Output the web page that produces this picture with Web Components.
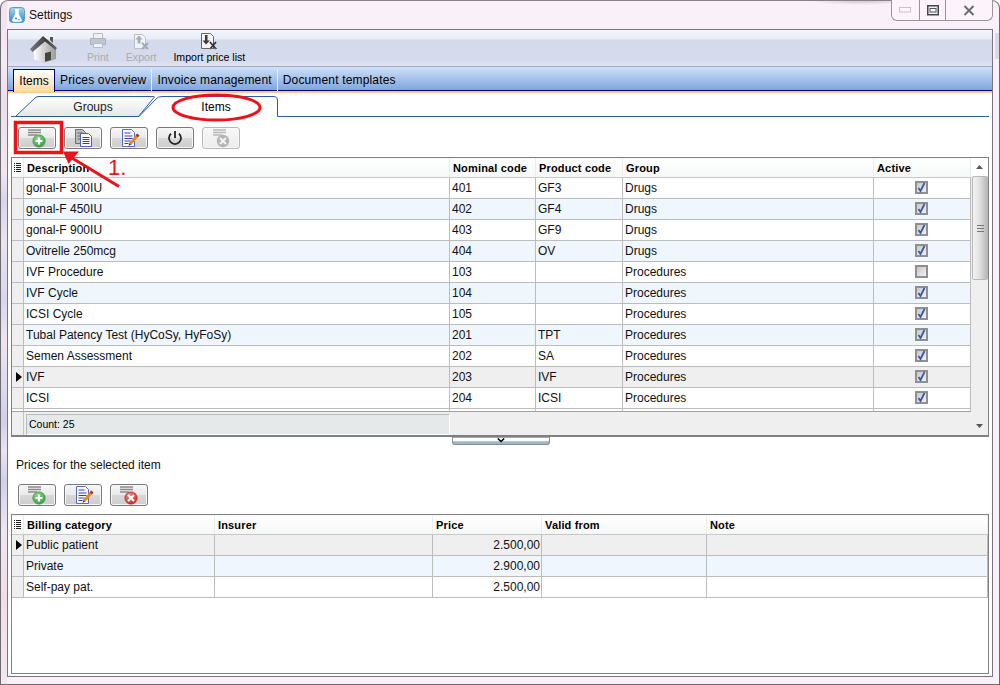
<!DOCTYPE html>
<html><head><meta charset="utf-8"><title>Settings</title>
<style>
html,body{margin:0;padding:0;height:685px;overflow:hidden}
body{font:12px "Liberation Sans",Arial,sans-serif;color:#000;position:relative;width:1000px}
</style></head>
<body>
<x-window label="Settings">
  <x-ribbon>
    <x-ribbon-item icon="home" home></x-ribbon-item>
    <x-ribbon-item icon="print" disabled>Print</x-ribbon-item>
    <x-ribbon-item icon="export" disabled>Export</x-ribbon-item>
    <x-ribbon-item icon="import">Import price list</x-ribbon-item>
  </x-ribbon>
  <x-tabs>
    <x-tab active>Items</x-tab>
    <x-tab>Prices overview</x-tab>
    <x-tab sep>Invoice management</x-tab>
    <x-tab sep>Document templates</x-tab>
  </x-tabs>
  <x-panel>
    <x-subtabs></x-subtabs>
    <x-buttons top="10" bottom="8">
      <x-btn icon="add"></x-btn><x-btn icon="copy"></x-btn><x-btn icon="edit"></x-btn><x-btn icon="power"></x-btn><x-btn icon="del" disabled></x-btn>
    </x-buttons>
    <x-grid id="g1" cols="12px 426px 86px 87px 251px 97px" footer scroll h="280">
      <x-row head><x-cell grip></x-cell><x-cell>Description</x-cell><x-cell>Nominal code</x-cell><x-cell>Product code</x-cell><x-cell>Group</x-cell><x-cell>Active</x-cell></x-row>
    </x-grid>
    <x-splitter></x-splitter>
    <x-label>Prices for the selected item</x-label>
    <x-buttons top="12" bottom="8">
      <x-btn icon="add"></x-btn><x-btn icon="edit"></x-btn><x-btn icon="delred"></x-btn>
    </x-buttons>
    <x-grid id="g2" cols="12px 191px 218px 109px 165px 281px" h="160">
      <x-row head><x-cell grip></x-cell><x-cell>Billing category</x-cell><x-cell>Insurer</x-cell><x-cell>Price</x-cell><x-cell>Valid from</x-cell><x-cell>Note</x-cell></x-row>
    </x-grid>
  </x-panel>
</x-window>
<x-annotations></x-annotations>

<script>
const ICONS = {
 add:`<svg width="36" height="20" viewBox="0 0 36 20"><defs><radialGradient id="g" cx=".4" cy=".3" r=".8"><stop offset="0" stop-color="#8ed88a"/><stop offset="1" stop-color="#2a9a3a"/></radialGradient></defs><path d="M9 2h13M9 4.5h13M9 7h9" stroke="#8a8a8a" stroke-width="1.4" fill="none"/><circle cx="20" cy="13" r="6.2" fill="url(#g)" stroke="#3c8a44" stroke-width=".6"/><path d="M20 9.5v7M16.5 13h7" stroke="#fff" stroke-width="2.2"/></svg>`,
 copy:`<svg width="36" height="20" viewBox="0 0 36 20"><path d="M10.5 1.5h7l3 3v11h-10z" fill="#bdbdbd" stroke="#6e6e6e"/><path d="M12.5 5h5M12.5 8h5M12.5 11h5" stroke="#666"/><path d="M15.5 5.5h8l3 3v10h-11z" fill="#fff" stroke="#4a5fc0"/><path d="M17.5 9.5h7M17.5 11.5h7M17.5 13.5h7M17.5 15.5h7" stroke="#2f3fb8"/></svg>`,
 edit:`<svg width="36" height="20" viewBox="0 0 36 20"><path d="M11.5 1.5h9l3 3v14h-12z" fill="#fff" stroke="#5468c8"/><path d="M13.5 5h6M13.5 8h8M13.5 10.5h8M13.5 13h6M13.5 15.5h4" stroke="#2f3fb8" stroke-width="1.1"/><path d="M19 16l8-9" stroke="#e88a20" stroke-width="3"/><path d="M25.8 8.2l1.6-1.8" stroke="#b03020" stroke-width="3"/><path d="M17.5 18l.8-2.8 1.8 1.4z" fill="#333"/></svg>`,
 power:`<svg width="36" height="20" viewBox="0 0 36 20"><path d="M14 5.6a6 6 0 1 0 8 0" fill="none" stroke="#222" stroke-width="1.8"/><path d="M18 3v7" stroke="#222" stroke-width="1.8"/></svg>`,
 del:`<svg width="36" height="20" viewBox="0 0 36 20"><path d="M10 2h13M10 4.5h13M10 7h9" stroke="#b8b8b8" stroke-width="1.4" fill="none"/><circle cx="20" cy="13" r="6.2" fill="#b4b4b4"/><path d="M17 10l6 6M23 10l-6 6" stroke="#f4f4f4" stroke-width="2"/></svg>`,
 delred:`<svg width="36" height="20" viewBox="0 0 36 20"><defs><radialGradient id="r" cx=".4" cy=".3" r=".8"><stop offset="0" stop-color="#f08a80"/><stop offset="1" stop-color="#cc2020"/></radialGradient></defs><path d="M9 2h13M9 4.5h13M9 7h9" stroke="#8a8a8a" stroke-width="1.4" fill="none"/><circle cx="20" cy="13" r="6.2" fill="url(#r)" stroke="#a82a2a" stroke-width=".6"/><path d="M17 10l6 6M23 10l-6 6" stroke="#fff" stroke-width="2"/></svg>`,
 home:`<svg width="30" height="30" viewBox="0 0 30 30"><defs><linearGradient id="w" x1="0" x2="1"><stop offset="0" stop-color="#fdfdfd"/><stop offset="1" stop-color="#9a9a9a"/></linearGradient><linearGradient id="rf" x1="0" x2="1"><stop offset="0" stop-color="#7a7a7a"/><stop offset=".6" stop-color="#3e3e3e"/><stop offset="1" stop-color="#666"/></linearGradient></defs><path d="M5 15l0 10.5 10 3.5 12-4V13l-9-8z" fill="url(#w)"/><path d="M21 3h3v6l-3-3z" fill="#555"/><path d="M1 15L14 2l14 12-1.5 2L16 7.5 3.5 18z" fill="url(#rf)"/><path d="M16 19l6-1.6V26l-6 1.8z" fill="#444"/></svg>`,
 print:`<svg width="18" height="16" viewBox="0 0 18 16"><path d="M4.5 .5h9v5h-9z" fill="#eef0f4" stroke="#b8bcc4"/><path d="M1.5 5.5h15v6h-15z" fill="#c2c6ce" stroke="#aeb2ba"/><path d="M4.5 10.500h9v4h-9z" fill="#f0f2f6" stroke="#b8bcc4"/></svg>`,
 export:`<svg width="20" height="18" viewBox="0 0 20 18"><path d="M3.5 1.5h8l3 3v11h-11z" fill="#f2f3f6" stroke="#bcbfc6"/><path d="M8 2.5l3.5 4H9.5v4h-3v-4H4.500z" fill="#a8acb4"/><path d="M11 10l6 6M17 10l-6 6" stroke="#a4a8b0" stroke-width="2"/></svg>`,
 import:`<svg width="20" height="18" viewBox="0 0 20 18"><path d="M2.500.5h9l3 3v12h-12z" fill="#f4f4f4" stroke="#666"/><path d="M7 11.500l-3.500-4H6V2h2.500v5.500H11z" fill="#3c3c3c"/><path d="M11 9l6 7M17 9l-6 7" stroke="#333" stroke-width="1.800"/><path d="M10 15.500h8" stroke="#666"/></svg>`
};
function def(name, css, html, init){
  customElements.define(name, class extends HTMLElement{
    constructor(){super();const s=this.attachShadow({mode:'open'});s.innerHTML=`<style>${css}</style>${html}`;}
    connectedCallback(){ if(init && !this._i){this._i=1;init.call(this,this.shadowRoot);} }
  });
}
const STRIP = `linear-gradient(#efe2ee 0,#f6eaf3 60px,#efdcec 100px,#f4e6ef 170px,#d9d4ee 200px,#ece2f2 240px,#d7d6f0 300px,#f0e4f2 340px,#cfd0ee 420px,#ece2f4 450px,#cfd0ee 480px,#f0e6f4 530px,#f4dce8 600px,#f2e8f2 684px) left top/6px 100% no-repeat`;
def('x-window',`
 :host{display:flex;flex-direction:column;box-sizing:border-box;width:1000px;height:685px;border:1px solid #6c6c70;border-top-color:#8a8088;border-radius:8px 8px 0 0;
  background:${STRIP},linear-gradient(#e0d6ea,#e0d6ea) right 0 top 32px/4px 26px no-repeat,radial-gradient(ellipse 50px 4px at 860px 0,#cfc6ce,transparent),#f9f0f9;padding:0 6px 7px 6px}
 .bar{height:28px;display:flex;align-items:flex-start;flex:none}
 .ic{margin:6px 4px 0 2px;width:16px;height:16px;flex:none}
 .t{margin-top:7px;line-height:15px;font-size:12px;color:#111}
 .ctl{margin-left:auto;margin-top:-1px;height:20px;display:flex;border:1px solid #9a949a;border-top:0;border-radius:0 0 6px 6px;box-sizing:content-box;background:#fdf4fb}
 .ctl div{display:flex;align-items:center;justify-content:center;height:20px;box-sizing:border-box}
 .ctl div+div{border-left:1px solid #9a949a}
 .client{flex:1;min-height:0;display:flex;flex-direction:column;border:1px solid #76767c;background:#fff}
`,`<div class="bar">
   <svg class="ic" viewBox="0 0 16 16"><defs><linearGradient id="f" x1="0" y1="0" x2="0" y2="1"><stop offset="0" stop-color="#a8d8f0"/><stop offset="1" stop-color="#2f86c8"/></linearGradient></defs><rect x=".5" y=".5" width="15" height="15" rx="3" fill="url(#f)" stroke="#5a9ccc"/><path d="M6 2.500h4M6.800 3v4L3.500 13c-.4.800 0 1.300.8 1.300h7.400c.8 0 1.200-.5.800-1.300L9.200 7V3z" fill="#fff" stroke="#fff"/><circle cx="7" cy="11.500" r="1.100" fill="#3c8cc8"/><circle cx="10" cy="12.500" r=".8" fill="#3c8cc8"/></svg>
   <span class="t"></span>
   <div class="ctl">
    <div style="width:27px"><svg width="13" height="6" viewBox="0 0 13 6"><rect x=".5" y=".5" width="11" height="4.500" fill="#fdf8fd" stroke="#c6c2cc"/></svg></div>
    <div style="width:26px"><svg width="12" height="11" viewBox="0 0 12 11"><rect x=".75" y=".75" width="10.500" height="9" fill="#eee" stroke="#44464e" stroke-width="1.500"/><rect x="3" y="3.500" width="6" height="3.500" fill="#fdf8fd" stroke="#55575f"/></svg></div>
    <div style="width:47px"><svg width="12" height="11" viewBox="0 0 12 11"><path d="M1.500 1l9 9M10.500 1l-9 9" stroke="#f8f8f8" stroke-width="4"/><path d="M1.500 1l9 9M10.500 1l-9 9" stroke="#6a6c72" stroke-width="2"/></svg></div>
   </div>
 </div><div class="client"><slot></slot></div>`,function(s){s.querySelector('.t').textContent=this.getAttribute('label');});
def('x-ribbon',`:host{display:flex;flex:none;box-sizing:border-box;height:37px;padding-left:21px;gap:0;border-bottom:1px solid #a8a8bc;
  background:linear-gradient(#f4f7fb 0,#e8edf6 9px,#d3daeb 10px,#d5dbec 30px,#e0e4f2 36px)}`,`<slot></slot>`);
def('x-ribbon-item',`:host{display:flex;flex-direction:column;align-items:center;font-size:10.600px;color:#000;height:36px;margin-right:17px}
 :host([disabled]){color:#a8acb4}
 :host([home]){margin-right:28px;justify-content:center}
 :host([home]) .i{margin-top:2px;height:31px}
 .i{height:19px;margin-top:3px;display:flex}.l{line-height:13px;margin-top:-1px;white-space:nowrap}`,
 `<div class="i"></div><div class="l"><slot></slot></div>`,function(s){s.querySelector('.i').innerHTML=ICONS[this.getAttribute('icon')];});
def('x-tabs',`:host{display:flex;flex:none;box-sizing:border-box;height:26px;padding:2px 0 0 5px;align-items:stretch;
  background:linear-gradient(#cfe1f9 0,#7fa6dd 23px,#000080 23px,#000080 24px,#f9ca90 24px);}`,`<slot></slot>`);
def('x-tab',`:host{display:flex;align-items:center;box-sizing:border-box;height:22px;padding:0 5px;font-size:12px;letter-spacing:.16px;white-space:nowrap;position:relative}
 :host([active]){border:1px solid #000080;border-bottom:0;background:linear-gradient(#fff,#fcd8a0);padding:0;width:42px;justify-content:center;height:23px;letter-spacing:0}
 :host([sep]){border-left:1px solid #e8f0fb}`,`<slot></slot>`);
def('x-panel',`:host{flex:1;min-height:0;display:flex;flex-direction:column;padding:3px 3px 3px 3px;background:#fff}`,`<slot></slot>`);
def('x-subtabs',`:host{display:flex;flex:none;height:21px;position:relative;font-size:12px}
 svg{position:absolute;left:0;top:0}
 span{position:relative;display:flex;align-items:center;justify-content:center;height:21px;padding-top:1px;box-sizing:border-box}
 .a{width:154px;margin-left:5px;color:#222}.b{width:92px}`,
 `<svg width="978" height="21" viewBox="0 0 978 21"><defs><linearGradient id="s" x1="0" y1="0" x2="0" y2="1"><stop offset="0" stop-color="#fefefe"/><stop offset="1" stop-color="#e6e6e6"/></linearGradient></defs>
 <path d="M4.500 20.500L24 2Q25.500.5 28 .5H142q2 0 1 1L127.500 20.500z" fill="url(#s)" stroke="#2a5ca8"/>
 <path d="M128 20.500L145 3Q147 .5 151 .5H263q3.500 0 3.500 3.500V20.500" fill="#fff" stroke="#2a5ca8"/>
 <path d="M0 20.500H128M266.500 20.500H978" stroke="#2a5ca8" fill="none"/></svg>
 <span class="a">Groups</span><span class="b">Items</span>`);
def('x-buttons',`:host{display:flex;flex:none;gap:8px;padding-left:7px}`,`<slot></slot>`,function(){this.style.marginTop=this.getAttribute('top')+'px';this.style.marginBottom=this.getAttribute('bottom')+'px';});
def('x-btn',`:host{display:flex;box-sizing:border-box;width:38px;height:22px;border:1px solid #77797c;border-radius:3px;background:linear-gradient(#f6f6f6 0,#eaeaea 48%,#d8d8d8 52%,#cdcdcd 100%);box-shadow:inset 0 0 0 1px #f8f8f8}
 :host([disabled]){border-color:#b8b8b8;background:linear-gradient(#f8f8f8,#ececec)}`,`<span></span>`,function(s){s.querySelector('span').innerHTML=ICONS[this.getAttribute('icon')];s.querySelector('span').style.display='flex';});
def('x-grid',`:host{display:flex;flex:none;box-sizing:border-box;border:1px solid #808084;background:#fff;--cols:none}
 :host([footer]){border-bottom-width:2px}
 .m{flex:1;min-width:0;display:flex;flex-direction:column}
 .rows{flex:1;min-height:0}
 .gap{height:2px;display:none}
 .foot{display:none;box-sizing:border-box;height:24px;border-top:1px solid #a0a0a4;background:#efefef}
 :host([footer]) .gap,:host([footer]) .foot{display:flex}
 .fh{width:12px;border-right:1px solid #c4c4c4;box-sizing:border-box;flex:none;margin-right:2px}
 .cnt{width:424px;box-sizing:border-box;margin-top:2px;height:21px;background:#e6e9ea;border:1px solid;border-color:#b8bcbc #fff #fff #b8bcbc;font-size:10.500px;line-height:19px;padding-left:2px}
 .gap i{display:block;box-sizing:border-box;height:2px;border-right:1px solid #c0c0c0}
 .sb{width:17px;flex:none;box-sizing:border-box;background:#efefef;display:none;flex-direction:column;position:relative}
 :host([scroll]) .sb{display:flex}
 .up{height:18px;display:flex;align-items:center;justify-content:center;background:#fff}
 .th{box-sizing:border-box;height:104px;margin:0 0 0 1px;border:1px solid #b8b8b8;border-radius:2px;background:linear-gradient(90deg,#f2f2f2,#e2e2e2 45%,#b8b8b8);display:flex;align-items:center;justify-content:center}
 .tr{flex:1}
 .dn{height:18px;display:flex;align-items:center;justify-content:center}`,
 `<div class="m"><div class="rows"><slot></slot></div>
   <div class="gap"><i style="width:12px"></i><i style="width:426px"></i><i style="width:86px"></i><i style="width:87px"></i><i style="width:251px"></i><i style="width:97px"></i></div>
   <div class="foot"><div class="fh"></div><div class="cnt">Count: 25</div></div></div>
  <div class="sb"><div class="up"><svg width="7" height="4" viewBox="0 0 7 4"><path d="M3.500 0L7 4H0z" fill="#555"/></svg></div>
  <div class="th"><svg width="7" height="7" viewBox="0 0 7 7"><path d="M0 .5h7M0 3.500h7M0 6.500h7" stroke="#777"/></svg></div><div class="tr"></div>
  <div class="dn"><svg width="7" height="4" viewBox="0 0 7 4"><path d="M3.500 4L7 0H0z" fill="#555"/></svg></div></div>`,
 function(){this.style.setProperty('--cols',this.getAttribute('cols'));this.style.height=this.getAttribute('h')+'px';});
def('x-row',`:host{display:grid;grid-template-columns:var(--cols);height:21px;box-sizing:border-box;background:#fff}
 :host([alt]){background:#eff6fd}
 :host([selected]){background:#efefef}
 :host([head]){height:20px;background:linear-gradient(#f4f5f5 0,#fff 2px,#f6f7f7 100%);border-bottom:1px solid #c8c8c8}`,`<slot></slot>`);
def('x-cell',`:host{display:flex;align-items:center;box-sizing:border-box;border-right:1px solid #bcbcbc;border-bottom:1px solid #bcbcbc;padding:0 2px;font-size:12px;white-space:nowrap;overflow:hidden;min-width:0;color:#111}
 :host([right]){justify-content:flex-end;padding-right:1px}
 :host([center]){justify-content:center;padding:0 2px 2px 0}
 :host([rh]){background:#efefef;padding:0 0 0 4px}
 :host([grip]){padding:0 0 0 2px;border-bottom:0;border-right:1px solid #e4e4e4}`,`<slot></slot>`,
 function(s){
   if(this.closest('x-row[head]')){this.style.fontWeight='bold';this.style.fontSize='11px';this.style.letterSpacing='.16px';this.style.borderBottom='0';this.style.borderRightColor='#ececec';this.style.color='#000';if(!this.hasAttribute('grip'))this.style.paddingLeft='3px';}
   if(this.hasAttribute('grip')){const d=document.createElement('span');s.appendChild(d);d.innerHTML=`<svg width="8" height="10" viewBox="0 0 8 10" style="display:block"><path d="M0 .5h1M2 .5h5M0 2.500h1M2 2.500h5M0 4.500h1M2 4.500h5M0 6.500h1M2 6.500h5M0 8.500h1M2 8.500h5" stroke="#222"/></svg>`;}
   if(this.hasAttribute('mark')){const d=document.createElement('span');s.appendChild(d);d.innerHTML=`<svg width="6" height="10" viewBox="0 0 6 10" style="display:block"><path d="M0 0l6 5-6 5z" fill="#000"/></svg>`;}
 });
def('x-check',`:host{display:block;width:13px;height:13px;box-sizing:border-box;border:2px solid #8f8f8f;background:linear-gradient(135deg,#c8c8cc,#f2f2f4)}
 svg{display:block;margin:-1px 0 0 -1px}`,``,function(s){
   if(this.hasAttribute('on')) s.innerHTML+=`<svg width="11" height="11" viewBox="0 0 11 11"><path d="M2.500 6l2 3 4-8" fill="none" stroke="#3a58a8" stroke-width="1.800"/></svg>`;
 });
def('x-splitter',`:host{display:block;flex:none;box-sizing:border-box;width:98px;height:8px;margin:0 0 0 441px;border:1px solid #8c8c90;border-top-color:#a8a8a8;border-radius:0 0 3px 3px;background:linear-gradient(#fff 0,#fff 45%,#a4bcca 60%,#9cb4c4 100%);position:relative}
 svg{position:absolute;left:44px;top:0}`,`<svg width="8" height="5" viewBox="0 0 8 5"><path d="M.8.500L4 3.500 7.200.500" fill="none" stroke="#000" stroke-width="1.500"/></svg>`);
def('x-label',`:host{display:block;flex:none;margin:13px 0 0 5px;line-height:14px;font-size:12px;color:#111}`,`<slot></slot>`);
def('x-annotations',`:host{position:absolute;left:0;top:0;width:1000px;height:685px;pointer-events:none;display:block}
 svg{position:absolute;left:0;top:0}
 div{position:absolute;left:108px;top:154px;font:22px/27px "Liberation Sans",Arial,sans-serif;color:#e8141c}`,
 `<svg width="1000" height="685" viewBox="0 0 1000 685">
  <rect x="15.500" y="122.500" width="46" height="30" fill="none" stroke="#ee1118" stroke-width="3.500"/>
  <ellipse cx="216.500" cy="107.500" rx="43.500" ry="12.500" fill="none" stroke="#ee1118" stroke-width="3"/>
  <path d="M119 186.500L72 158" stroke="#e8141c" stroke-width="3.200" fill="none"/>
  <path d="M63 151.500L79 151.500 68.500 164z" fill="#e8141c"/>
 </svg><div>1.</div>`);

const el=(t,a={},kids=[])=>{const e=document.createElement(t);for(const k in a)e.setAttribute(k,a[k]);kids.forEach(c=>e.append(c));return e;};
const g1=[["gonal-F 300IU","401","GF3","Drugs",1],["gonal-F 450IU","402","GF4","Drugs",1],["gonal-F 900IU","403","GF9","Drugs",1],["Ovitrelle 250mcg","404","OV","Drugs",1],["IVF Procedure","103","","Procedures",0],["IVF Cycle","104","","Procedures",1],["ICSI Cycle","105","","Procedures",1],["Tubal Patency Test (HyCoSy, HyFoSy)","201","TPT","Procedures",1],["Semen Assessment","202","SA","Procedures",1],["IVF","203","IVF","Procedures",1],["ICSI","204","ICSI","Procedures",1]];
const G1=document.getElementById('g1');
g1.forEach((r,i)=>{
  const row=el('x-row',i==9?{selected:''}:(i%2?{alt:''}:{}));
  row.append(el('x-cell',i==9?{rh:'',mark:''}:{rh:''}));
  r.slice(0,4).forEach(t=>row.append(el('x-cell',{},[t])));
  row.append(el('x-cell',{center:''},[el('x-check',r[4]?{on:''}:{})]));
  G1.append(row);
});
const g2=[["Public patient","","2.500,00"],["Private","","2.900,00"],["Self-pay pat.","","2.500,00"]];
const G2=document.getElementById('g2');
g2.forEach((r,i)=>{
  const row=el('x-row',i==0?{selected:''}:(i%2?{alt:''}:{}));
  row.append(el('x-cell',i==0?{rh:'',mark:''}:{rh:''}));
  row.append(el('x-cell',{},[r[0]]),el('x-cell',{},[r[1]]),el('x-cell',{right:''},[r[2]]),el('x-cell'),el('x-cell'));
  G2.append(row);
});
</script>
</body></html>
